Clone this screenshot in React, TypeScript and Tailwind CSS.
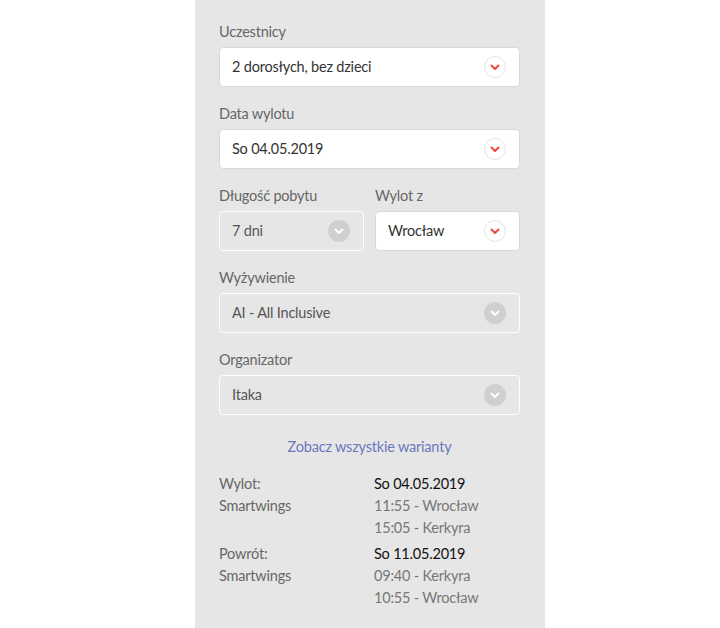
import React from "react";

type Tone = "active" | "muted";

function Chevron({ tone }: { tone: Tone }) {
  if (tone === "active") {
    return (
      <span className="flex h-[22px] w-[22px] items-center justify-center rounded-full border border-[#e4e4e4] bg-white">
        <svg width="10" height="7" viewBox="0 0 10 7" fill="none">
          <path d="M1.5 1.5 5 5l3.5-3.5" stroke="#ef4b3f" strokeWidth="2" strokeLinecap="round" strokeLinejoin="round" />
        </svg>
      </span>
    );
  }
  return (
    <span className="flex h-[22px] w-[22px] items-center justify-center rounded-full bg-[#cfcfcf]">
      <svg width="10" height="7" viewBox="0 0 10 7" fill="none">
        <path d="M1.5 1.5 5 5l3.5-3.5" stroke="#ffffff" strokeWidth="2" strokeLinecap="round" strokeLinejoin="round" />
      </svg>
    </span>
  );
}

function Field({ label, value, tone }: { label: string; value: string; tone: Tone }) {
  const box =
    tone === "active"
      ? "bg-white border-[#d9d9d9] text-[#333333]"
      : "bg-[#e6e6e6] border-white text-[#555555]";
  return (
    <div className="flex flex-col">
      <div className="h-[27px] text-[14.5px] leading-[24px] tracking-[-0.2px] text-[#666666]">{label}</div>
      <div className={`flex h-[40px] items-center justify-between rounded-[4px] border pl-[12px] pr-[13px] text-[14.5px] tracking-[-0.2px] ${box}`}>
        <span>{value}</span>
        <Chevron tone={tone} />
      </div>
    </div>
  );
}

function FlightRow({ title, carrier, date, legs }: { title: string; carrier: string; date: string; legs: string[] }) {
  return (
    <div className="grid grid-cols-[155px_1fr] text-[14.5px] leading-[22px] tracking-[-0.2px]">
      <div className="flex flex-col text-[#666666]">
        <span>{title}</span>
        <span>{carrier}</span>
      </div>
      <div className="flex flex-col">
        <span className="text-[#111111]">{date}</span>
        {legs.map((l) => (
          <span key={l} className="text-[#777777]">
            {l}
          </span>
        ))}
      </div>
    </div>
  );
}

export default function App() {
  return (
    <div className="flex min-h-[628px] w-[720px] bg-white" style={{ fontFamily: "Lato, 'Noto Sans', sans-serif" }}>
      <div className="ml-[195px] flex w-[350px] flex-col bg-[#e6e6e6] pb-6 pl-6 pr-[25px] pt-[20px]">
        <div className="flex flex-col gap-[15px]">
          <Field label="Uczestnicy" value="2 dorosłych, bez dzieci" tone="active" />
          <Field label="Data wylotu" value="So 04.05.2019" tone="active" />
          <div className="grid grid-cols-[145px_145px] gap-[11px]">
            <Field label="Długość pobytu" value="7 dni" tone="muted" />
            <Field label="Wylot z" value="Wrocław" tone="active" />
          </div>
          <Field label="Wyżywienie" value="AI - All Inclusive" tone="muted" />
          <Field label="Organizator" value="Itaka" tone="muted" />
        </div>
        <div className="mt-[21px] text-center text-[14.5px] leading-[22px] tracking-[-0.2px] text-[#6b78bd]">Zobacz wszystkie warianty</div>
        <div className="mt-[15px] flex flex-col gap-[4px]">
          <FlightRow
            title="Wylot:"
            carrier="Smartwings"
            date="So 04.05.2019"
            legs={["11:55 - Wrocław", "15:05 - Kerkyra"]}
          />
          <FlightRow
            title="Powrót:"
            carrier="Smartwings"
            date="So 11.05.2019"
            legs={["09:40 - Kerkyra", "10:55 - Wrocław"]}
          />
        </div>
      </div>
    </div>
  );
}
